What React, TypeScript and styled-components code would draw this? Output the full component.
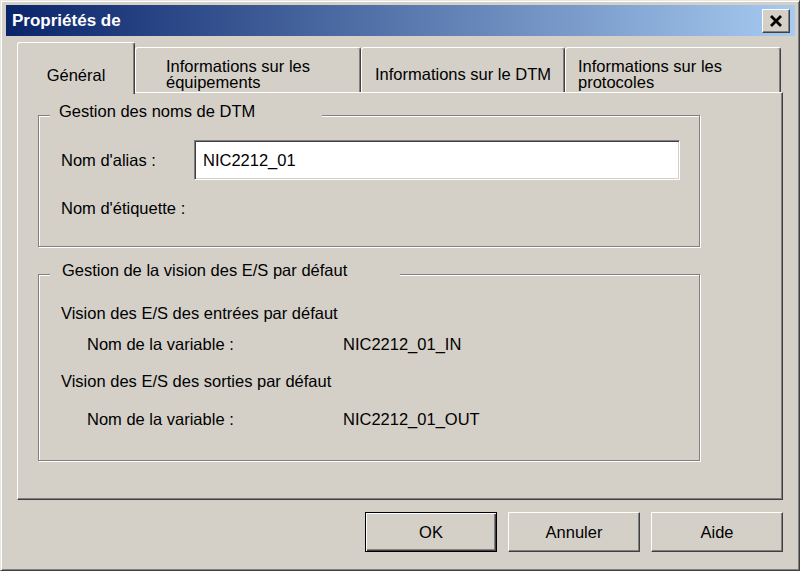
import React from "react";
import styled, { createGlobalStyle } from "styled-components";

const Global = createGlobalStyle`
  html, body { margin: 0; padding: 0; background: #d4d0c8; }
  body { font-family: "Liberation Sans", Arial, sans-serif; }
`;

const Window = styled.div`
  width: 800px;
  height: 571px;
  box-sizing: border-box;
  background: #d4d0c8;
  border: 1px solid;
  border-color: #e8e6e0 #404040 #404040 #e8e6e0;
  box-shadow: inset 1px 1px 0 #fff, inset -1px -1px 0 #808080;
  padding: 4px 4px 0 5px;
  display: flex;
  flex-direction: column;
  font-size: 16.5px;
  color: #000;
`;

const TitleBar = styled.div`
  height: 31px;
  flex: none;
  background: linear-gradient(to right, #0a246a, #a6caf0);
  display: flex;
  align-items: center;
  justify-content: space-between;
  padding: 0 5px 0 6px;
`;

const Title = styled.span`
  color: #fff;
  font-weight: bold;
  font-size: 17px;
`;

const CloseButton = styled.div`
  box-sizing: border-box;
  width: 28px;
  height: 24px;
  background: #d4d0c8;
  border: 1px solid;
  border-color: #fff #404040 #404040 #fff;
  box-shadow: inset -1px -1px 0 #808080;
  display: flex;
  align-items: center;
  justify-content: center;
`;

const Content = styled.div`
  display: flex;
  flex-direction: column;
  padding: 6px 12px 0 11px;
`;

const TabStrip = styled.div`
  display: flex;
  align-items: flex-end;
  height: 50px;
`;

const Tab = styled.div<{ $selected?: boolean; $width: number; $indent?: number }>`
  box-sizing: border-box;
  width: ${(p) => p.$width}px;
  height: ${(p) => (p.$selected ? 52 : 45)}px;
  margin-bottom: ${(p) => (p.$selected ? -2 : 0)}px;
  position: relative;
  z-index: ${(p) => (p.$selected ? 2 : 0)};
  background: #d4d0c8;
  border-top: 1px solid #fff;
  border-left: 1px solid #fff;
  border-right: 1px solid #404040;
  box-shadow: inset -1px 0 0 #808080;
  border-radius: 3px 3px 0 0;
  display: flex;
  align-items: center;
  justify-content: ${(p) => (p.$indent !== undefined ? "flex-start" : "center")};
  padding: ${(p) => (p.$selected ? 14 : 8)}px 0 0 ${(p) => p.$indent ?? 0}px;
  line-height: 16.5px;
`;

const Panel = styled.div`
  box-sizing: border-box;
  border: 1px solid;
  border-color: #fff #404040 #404040 #fff;
  box-shadow: inset -1px -1px 0 #808080;
  padding: 9px 0 38px 20px;
  display: flex;
  flex-direction: column;
  gap: 14px;
`;

const Group = styled.fieldset<{ $pad: string }>`
  box-sizing: border-box;
  width: 662px;
  min-width: 0;
  margin: 0;
  border: 1px solid #808080;
  box-shadow: inset 1px 1px 0 #fff, 1px 1px 0 #fff;
  padding: ${(p) => p.$pad};
`;

const Legend = styled.legend<{ $pl: number; $pr: number }>`
  margin-left: -11px;
  padding: 0 ${(p) => p.$pr}px 8px ${(p) => p.$pl}px;
  line-height: 19px;
  background: #d4d0c8;
`;

const FieldGrid = styled.div`
  display: grid;
  grid-template-columns: 133px 1fr;
  row-gap: 19px;
  align-items: center;
  line-height: 19px;
`;

const TextBox = styled.input`
  box-sizing: border-box;
  height: 40px;
  width: 100%;
  margin: 0;
  font: inherit;
  font-family: "Liberation Sans", Arial, sans-serif;
  font-size: 16.5px;
  color: #000;
  background: #fff;
  border: 1px solid;
  border-color: #808080 #fff #fff #808080;
  box-shadow: inset 1px 1px 0 #404040, inset -1px -1px 0 #d4d0c8;
  padding: 0 8px;
  outline: none;
`;

const Heading = styled.div<{ $mt: number }>`
  line-height: 19px;
  margin-top: ${(p) => p.$mt}px;
`;

const VarRow = styled.div<{ $mt: number }>`
  display: grid;
  grid-template-columns: 256px 1fr;
  padding-left: 26px;
  line-height: 19px;
  margin-top: ${(p) => p.$mt}px;
`;

const ButtonRow = styled.div`
  display: flex;
  justify-content: flex-end;
  gap: 11px;
  margin-top: 12px;
`;

const Button = styled.div<{ $default?: boolean }>`
  box-sizing: border-box;
  width: 132px;
  height: 40px;
  display: flex;
  align-items: center;
  justify-content: center;
  background: #d4d0c8;
  border: 1px solid;
  border-color: ${(p) => (p.$default ? "#000" : "#fff #404040 #404040 #fff")};
  box-shadow: ${(p) =>
    p.$default
      ? "inset 1px 1px 0 #fff, inset -1px -1px 0 #404040, inset -2px -2px 0 #808080"
      : "inset -1px -1px 0 #808080"};
`;

export default function App() {
  return (
    <>
      <Global />
      <Window>
        <TitleBar>
          <Title>Propriétés de</Title>
          <CloseButton>
            <svg width="14" height="12" viewBox="0 0 14 12">
              <path d="M2 1 L12 11 M12 1 L2 11" stroke="#000" strokeWidth="2.8" />
            </svg>
          </CloseButton>
        </TitleBar>
        <Content>
          <TabStrip>
            <Tab $selected $width={118}>Général</Tab>
            <Tab $width={226} $indent={30}>
              Informations sur les
              <br />
              équipements
            </Tab>
            <Tab $width={204}>Informations sur le DTM</Tab>
            <Tab $width={216} $indent={12}>
              Informations sur les
              <br />
              protocoles
            </Tab>
          </TabStrip>
          <Panel>
            <Group $pad="11px 19px 28px 22px">
              <Legend $pl={9} $pr={67}>Gestion des noms de DTM</Legend>
              <FieldGrid>
                <span>Nom d'alias :</span>
                <TextBox readOnly value="NIC2212_01" />
                <span>Nom d'étiquette :</span>
                <span />
              </FieldGrid>
            </Group>
            <Group $pad="16px 19px 31px 22px">
              <Legend $pl={12} $pr={53}>Gestion de la vision des E/S par défaut</Legend>
              <Heading $mt={0}>Vision des E/S des entrées par défaut</Heading>
              <VarRow $mt={12}>
                <span>Nom de la variable :</span>
                <span>NIC2212_01_IN</span>
              </VarRow>
              <Heading $mt={18}>Vision des E/S des sorties par défaut</Heading>
              <VarRow $mt={19}>
                <span>Nom de la variable :</span>
                <span>NIC2212_01_OUT</span>
              </VarRow>
            </Group>
          </Panel>
          <ButtonRow>
            <Button $default>OK</Button>
            <Button>Annuler</Button>
            <Button>Aide</Button>
          </ButtonRow>
        </Content>
      </Window>
    </>
  );
}
